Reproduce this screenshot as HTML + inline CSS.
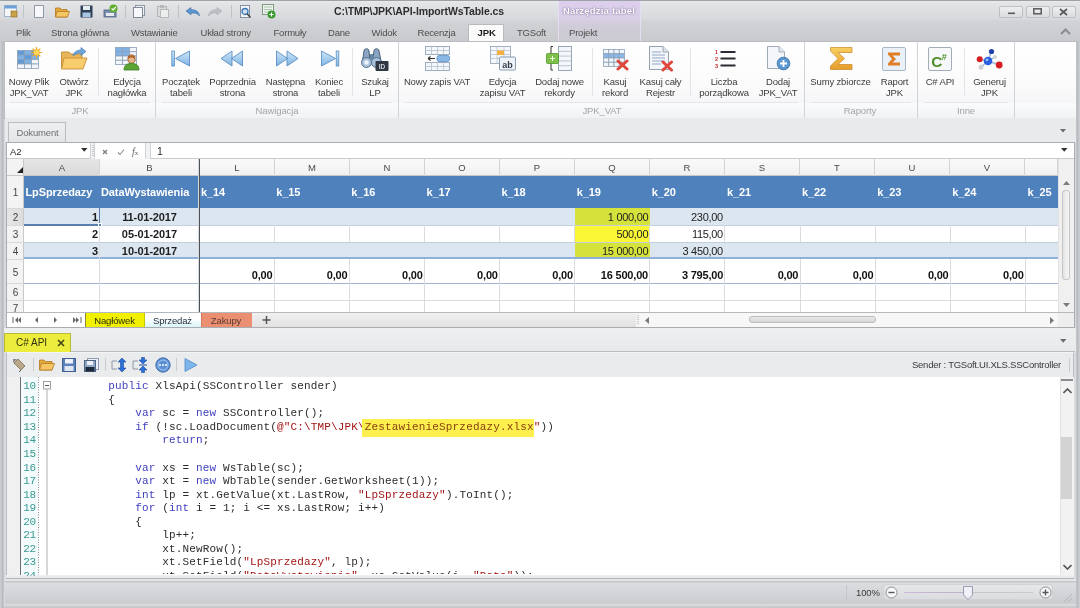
<!DOCTYPE html><html><head><meta charset="utf-8"><style>
html,body{margin:0;padding:0;}
body{width:1080px;height:608px;overflow:hidden;position:relative;background:#d4d6da;font-family:"Liberation Sans",sans-serif;}
div,svg{box-sizing:border-box;}
</style></head><body><div style="position:absolute;left:0;top:0;width:1080px;height:608px;overflow:hidden;filter:blur(0.35px)">
<div style="position:absolute;left:0px;top:0px;width:1080px;height:41px;background:linear-gradient(#e9eaec 1px,#e3e4e6 3px,#d9dadd 18px,#d0d2d5 22px,#c8cace 41px);"></div>
<div style="position:absolute;left:0px;top:0px;width:1080px;height:1px;background:#9ea1a5;"></div>
<div style="position:absolute;left:0px;top:41px;width:1080px;height:567px;background:#d7d9dc;"></div>
<div style="position:absolute;left:558px;top:1px;width:83px;height:40px;background:linear-gradient(#dccfee 0px,#d8cfe6 18px,#d0ccd9 24px,#cbc9d1 40px);border-left:1px solid #e4def0;border-right:1px solid #e4def0;"></div>
<div style="position:absolute;left:449px;width:300px;text-align:center;top:6.46px;white-space:nowrap;font:bold 9.5px/9.5px 'Liberation Sans',sans-serif;color:#ffffff;letter-spacing:0.2px;text-shadow:0 0 2px #7d6d96,0 0 1px #7d6d96;">Narzędzia tabel</div>
<div style="position:absolute;left:334px;top:6.11px;white-space:nowrap;font:bold 10.5px/10.5px 'Liberation Sans',sans-serif;color:#2e2e2e;letter-spacing:-0.1px;">C:\TMP\JPK\API-ImportWsTable.cs</div>
<div style="position:absolute;left:999px;top:6px;width:24px;height:12px;border:1px solid #bdbfc3;border-radius:2px;background:linear-gradient(#eeeff1,#dadcdf);"></div>
<div style="position:absolute;left:1026px;top:6px;width:24px;height:12px;border:1px solid #bdbfc3;border-radius:2px;background:linear-gradient(#eeeff1,#dadcdf);"></div>
<div style="position:absolute;left:1052px;top:6px;width:24px;height:12px;border:1px solid #bdbfc3;border-radius:2px;background:linear-gradient(#eeeff1,#dadcdf);"></div>
<svg style="position:absolute;left:1008px;top:12px" width="8" height="3" viewBox="0 0 8 3"><rect x="0" y="0.5" width="7" height="1.6" fill="#5a5a5a"/></svg>
<svg style="position:absolute;left:1033px;top:8px" width="10" height="7" viewBox="0 0 10 7"><rect x="0.8" y="0.8" width="7.4" height="5" fill="none" stroke="#5a5a5a" stroke-width="1.5"/></svg>
<svg style="position:absolute;left:1059px;top:8px" width="9" height="8" viewBox="0 0 9 8"><path d="M1 1 L8 7 M8 1 L1 7" stroke="#5a5a5a" stroke-width="1.7"/></svg>
<div style="position:absolute;left:16px;top:27.96px;white-space:nowrap;font:normal 9.5px/9.5px 'Liberation Sans',sans-serif;color:#4e4e4e;letter-spacing:-0.2px;">Plik</div>
<div style="position:absolute;left:51px;top:27.96px;white-space:nowrap;font:normal 9.5px/9.5px 'Liberation Sans',sans-serif;color:#4e4e4e;letter-spacing:-0.2px;">Strona główna</div>
<div style="position:absolute;left:131px;top:27.96px;white-space:nowrap;font:normal 9.5px/9.5px 'Liberation Sans',sans-serif;color:#4e4e4e;letter-spacing:-0.2px;">Wstawianie</div>
<div style="position:absolute;left:200.5px;top:27.96px;white-space:nowrap;font:normal 9.5px/9.5px 'Liberation Sans',sans-serif;color:#4e4e4e;letter-spacing:-0.2px;">Układ strony</div>
<div style="position:absolute;left:273.5px;top:27.96px;white-space:nowrap;font:normal 9.5px/9.5px 'Liberation Sans',sans-serif;color:#4e4e4e;letter-spacing:-0.2px;">Formuły</div>
<div style="position:absolute;left:328px;top:27.96px;white-space:nowrap;font:normal 9.5px/9.5px 'Liberation Sans',sans-serif;color:#4e4e4e;letter-spacing:-0.2px;">Dane</div>
<div style="position:absolute;left:371.5px;top:27.96px;white-space:nowrap;font:normal 9.5px/9.5px 'Liberation Sans',sans-serif;color:#4e4e4e;letter-spacing:-0.2px;">Widok</div>
<div style="position:absolute;left:417.5px;top:27.96px;white-space:nowrap;font:normal 9.5px/9.5px 'Liberation Sans',sans-serif;color:#4e4e4e;letter-spacing:-0.2px;">Recenzja</div>
<div style="position:absolute;left:517px;top:27.96px;white-space:nowrap;font:normal 9.5px/9.5px 'Liberation Sans',sans-serif;color:#4e4e4e;letter-spacing:-0.2px;">TGSoft</div>
<div style="position:absolute;left:569px;top:27.96px;white-space:nowrap;font:normal 9.5px/9.5px 'Liberation Sans',sans-serif;color:#4e4e4e;letter-spacing:-0.2px;">Projekt</div>
<div style="position:absolute;left:468px;top:24px;width:36px;height:18px;background:#fbfbfc;border:1px solid #b7babe;border-bottom:none;"></div>
<div style="position:absolute;left:477.5px;top:27.96px;white-space:nowrap;font:bold 9.5px/9.5px 'Liberation Sans',sans-serif;color:#1d1d1d;letter-spacing:-0.1px;">JPK</div>
<svg style="position:absolute;left:1059px;top:27px" width="13" height="9" viewBox="0 0 13 9"><path d="M2 7 L6.5 2.5 L11 7" fill="none" stroke="#8a8c90" stroke-width="2"/></svg>
<div style="position:absolute;left:4px;top:41px;width:1073px;height:78px;background:linear-gradient(#ffffff 0px,#fbfbfc 40px,#f2f3f5 77px);border:1px solid #b9bcc0;border-bottom-color:#9c9fa3;"></div>
<div style="position:absolute;left:5px;top:103px;width:1071px;height:15px;background:linear-gradient(#fafbfc,#f1f2f4);"></div>
<div style="position:absolute;left:10px;top:102px;width:140px;height:1px;background:#e4e6e9;"></div>
<div style="position:absolute;left:162px;top:102px;width:230px;height:1px;background:#e4e6e9;"></div>
<div style="position:absolute;left:405px;top:102px;width:393px;height:1px;background:#e4e6e9;"></div>
<div style="position:absolute;left:811px;top:102px;width:100px;height:1px;background:#e4e6e9;"></div>
<div style="position:absolute;left:924px;top:102px;width:84px;height:1px;background:#e4e6e9;"></div>
<div style="position:absolute;left:155px;top:42px;width:1px;height:76px;background:#d0d3d7;"></div>
<div style="position:absolute;left:398px;top:42px;width:1px;height:76px;background:#d0d3d7;"></div>
<div style="position:absolute;left:804px;top:42px;width:1px;height:76px;background:#d0d3d7;"></div>
<div style="position:absolute;left:917px;top:42px;width:1px;height:76px;background:#d0d3d7;"></div>
<div style="position:absolute;left:1014px;top:42px;width:1px;height:76px;background:#d0d3d7;"></div>
<div style="position:absolute;left:98px;top:48px;width:1px;height:48px;background:#e3e5e8;"></div>
<div style="position:absolute;left:352px;top:48px;width:1px;height:48px;background:#e3e5e8;"></div>
<div style="position:absolute;left:592px;top:48px;width:1px;height:48px;background:#e3e5e8;"></div>
<div style="position:absolute;left:690px;top:48px;width:1px;height:48px;background:#e3e5e8;"></div>
<div style="position:absolute;left:964px;top:48px;width:1px;height:48px;background:#e3e5e8;"></div>
<div style="position:absolute;left:-70px;width:300px;text-align:center;top:105.96px;white-space:nowrap;font:normal 9.5px/9.5px 'Liberation Sans',sans-serif;color:#a3a5a8;letter-spacing:-0.1px;">JPK</div>
<div style="position:absolute;left:127px;width:300px;text-align:center;top:105.96px;white-space:nowrap;font:normal 9.5px/9.5px 'Liberation Sans',sans-serif;color:#a3a5a8;letter-spacing:-0.1px;">Nawigacja</div>
<div style="position:absolute;left:452px;width:300px;text-align:center;top:105.96px;white-space:nowrap;font:normal 9.5px/9.5px 'Liberation Sans',sans-serif;color:#a3a5a8;letter-spacing:-0.1px;">JPK_VAT</div>
<div style="position:absolute;left:710px;width:300px;text-align:center;top:105.96px;white-space:nowrap;font:normal 9.5px/9.5px 'Liberation Sans',sans-serif;color:#a3a5a8;letter-spacing:-0.1px;">Raporty</div>
<div style="position:absolute;left:816px;width:300px;text-align:center;top:105.96px;white-space:nowrap;font:normal 9.5px/9.5px 'Liberation Sans',sans-serif;color:#a3a5a8;letter-spacing:-0.1px;">Inne</div>
<div style="position:absolute;left:-121px;width:300px;text-align:center;top:77.46px;white-space:nowrap;font:normal 9.5px/9.5px 'Liberation Sans',sans-serif;color:#3c3c3c;letter-spacing:-0.15px;">Nowy Plik</div>
<div style="position:absolute;left:-121px;width:300px;text-align:center;top:87.96px;white-space:nowrap;font:normal 9.5px/9.5px 'Liberation Sans',sans-serif;color:#3c3c3c;letter-spacing:-0.15px;">JPK_VAT</div>
<div style="position:absolute;left:-76px;width:300px;text-align:center;top:77.46px;white-space:nowrap;font:normal 9.5px/9.5px 'Liberation Sans',sans-serif;color:#3c3c3c;letter-spacing:-0.15px;">Otwórz</div>
<div style="position:absolute;left:-76px;width:300px;text-align:center;top:87.96px;white-space:nowrap;font:normal 9.5px/9.5px 'Liberation Sans',sans-serif;color:#3c3c3c;letter-spacing:-0.15px;">JPK</div>
<div style="position:absolute;left:-23px;width:300px;text-align:center;top:77.46px;white-space:nowrap;font:normal 9.5px/9.5px 'Liberation Sans',sans-serif;color:#3c3c3c;letter-spacing:-0.15px;">Edycja</div>
<div style="position:absolute;left:-23px;width:300px;text-align:center;top:87.96px;white-space:nowrap;font:normal 9.5px/9.5px 'Liberation Sans',sans-serif;color:#3c3c3c;letter-spacing:-0.15px;">nagłówka</div>
<div style="position:absolute;left:31px;width:300px;text-align:center;top:77.46px;white-space:nowrap;font:normal 9.5px/9.5px 'Liberation Sans',sans-serif;color:#3c3c3c;letter-spacing:-0.15px;">Początek</div>
<div style="position:absolute;left:31px;width:300px;text-align:center;top:87.96px;white-space:nowrap;font:normal 9.5px/9.5px 'Liberation Sans',sans-serif;color:#3c3c3c;letter-spacing:-0.15px;">tabeli</div>
<div style="position:absolute;left:82.5px;width:300px;text-align:center;top:77.46px;white-space:nowrap;font:normal 9.5px/9.5px 'Liberation Sans',sans-serif;color:#3c3c3c;letter-spacing:-0.15px;">Poprzednia</div>
<div style="position:absolute;left:82.5px;width:300px;text-align:center;top:87.96px;white-space:nowrap;font:normal 9.5px/9.5px 'Liberation Sans',sans-serif;color:#3c3c3c;letter-spacing:-0.15px;">strona</div>
<div style="position:absolute;left:135.5px;width:300px;text-align:center;top:77.46px;white-space:nowrap;font:normal 9.5px/9.5px 'Liberation Sans',sans-serif;color:#3c3c3c;letter-spacing:-0.15px;">Następna</div>
<div style="position:absolute;left:135.5px;width:300px;text-align:center;top:87.96px;white-space:nowrap;font:normal 9.5px/9.5px 'Liberation Sans',sans-serif;color:#3c3c3c;letter-spacing:-0.15px;">strona</div>
<div style="position:absolute;left:179px;width:300px;text-align:center;top:77.46px;white-space:nowrap;font:normal 9.5px/9.5px 'Liberation Sans',sans-serif;color:#3c3c3c;letter-spacing:-0.15px;">Koniec</div>
<div style="position:absolute;left:179px;width:300px;text-align:center;top:87.96px;white-space:nowrap;font:normal 9.5px/9.5px 'Liberation Sans',sans-serif;color:#3c3c3c;letter-spacing:-0.15px;">tabeli</div>
<div style="position:absolute;left:225px;width:300px;text-align:center;top:77.46px;white-space:nowrap;font:normal 9.5px/9.5px 'Liberation Sans',sans-serif;color:#3c3c3c;letter-spacing:-0.15px;">Szukaj</div>
<div style="position:absolute;left:225px;width:300px;text-align:center;top:87.96px;white-space:nowrap;font:normal 9.5px/9.5px 'Liberation Sans',sans-serif;color:#3c3c3c;letter-spacing:-0.15px;">LP</div>
<div style="position:absolute;left:287px;width:300px;text-align:center;top:77.46px;white-space:nowrap;font:normal 9.5px/9.5px 'Liberation Sans',sans-serif;color:#3c3c3c;letter-spacing:-0.15px;">Nowy zapis VAT</div>
<div style="position:absolute;left:352.5px;width:300px;text-align:center;top:77.46px;white-space:nowrap;font:normal 9.5px/9.5px 'Liberation Sans',sans-serif;color:#3c3c3c;letter-spacing:-0.15px;">Edycja</div>
<div style="position:absolute;left:352.5px;width:300px;text-align:center;top:87.96px;white-space:nowrap;font:normal 9.5px/9.5px 'Liberation Sans',sans-serif;color:#3c3c3c;letter-spacing:-0.15px;">zapisu VAT</div>
<div style="position:absolute;left:409.5px;width:300px;text-align:center;top:77.46px;white-space:nowrap;font:normal 9.5px/9.5px 'Liberation Sans',sans-serif;color:#3c3c3c;letter-spacing:-0.15px;">Dodaj nowe</div>
<div style="position:absolute;left:409.5px;width:300px;text-align:center;top:87.96px;white-space:nowrap;font:normal 9.5px/9.5px 'Liberation Sans',sans-serif;color:#3c3c3c;letter-spacing:-0.15px;">rekordy</div>
<div style="position:absolute;left:465px;width:300px;text-align:center;top:77.46px;white-space:nowrap;font:normal 9.5px/9.5px 'Liberation Sans',sans-serif;color:#3c3c3c;letter-spacing:-0.15px;">Kasuj</div>
<div style="position:absolute;left:465px;width:300px;text-align:center;top:87.96px;white-space:nowrap;font:normal 9.5px/9.5px 'Liberation Sans',sans-serif;color:#3c3c3c;letter-spacing:-0.15px;">rekord</div>
<div style="position:absolute;left:510.5px;width:300px;text-align:center;top:77.46px;white-space:nowrap;font:normal 9.5px/9.5px 'Liberation Sans',sans-serif;color:#3c3c3c;letter-spacing:-0.15px;">Kasuj cały</div>
<div style="position:absolute;left:510.5px;width:300px;text-align:center;top:87.96px;white-space:nowrap;font:normal 9.5px/9.5px 'Liberation Sans',sans-serif;color:#3c3c3c;letter-spacing:-0.15px;">Rejestr</div>
<div style="position:absolute;left:574px;width:300px;text-align:center;top:77.46px;white-space:nowrap;font:normal 9.5px/9.5px 'Liberation Sans',sans-serif;color:#3c3c3c;letter-spacing:-0.15px;">Liczba</div>
<div style="position:absolute;left:574px;width:300px;text-align:center;top:87.96px;white-space:nowrap;font:normal 9.5px/9.5px 'Liberation Sans',sans-serif;color:#3c3c3c;letter-spacing:-0.15px;">porządkowa</div>
<div style="position:absolute;left:628px;width:300px;text-align:center;top:77.46px;white-space:nowrap;font:normal 9.5px/9.5px 'Liberation Sans',sans-serif;color:#3c3c3c;letter-spacing:-0.15px;">Dodaj</div>
<div style="position:absolute;left:628px;width:300px;text-align:center;top:87.96px;white-space:nowrap;font:normal 9.5px/9.5px 'Liberation Sans',sans-serif;color:#3c3c3c;letter-spacing:-0.15px;">JPK_VAT</div>
<div style="position:absolute;left:690.5px;width:300px;text-align:center;top:77.46px;white-space:nowrap;font:normal 9.5px/9.5px 'Liberation Sans',sans-serif;color:#3c3c3c;letter-spacing:-0.15px;">Sumy zbiorcze</div>
<div style="position:absolute;left:744.5px;width:300px;text-align:center;top:77.46px;white-space:nowrap;font:normal 9.5px/9.5px 'Liberation Sans',sans-serif;color:#3c3c3c;letter-spacing:-0.15px;">Raport</div>
<div style="position:absolute;left:744.5px;width:300px;text-align:center;top:87.96px;white-space:nowrap;font:normal 9.5px/9.5px 'Liberation Sans',sans-serif;color:#3c3c3c;letter-spacing:-0.15px;">JPK</div>
<div style="position:absolute;left:790px;width:300px;text-align:center;top:77.46px;white-space:nowrap;font:normal 9.5px/9.5px 'Liberation Sans',sans-serif;color:#3c3c3c;letter-spacing:-0.15px;">C# API</div>
<div style="position:absolute;left:839.5px;width:300px;text-align:center;top:77.46px;white-space:nowrap;font:normal 9.5px/9.5px 'Liberation Sans',sans-serif;color:#3c3c3c;letter-spacing:-0.15px;">Generuj</div>
<div style="position:absolute;left:839.5px;width:300px;text-align:center;top:87.96px;white-space:nowrap;font:normal 9.5px/9.5px 'Liberation Sans',sans-serif;color:#3c3c3c;letter-spacing:-0.15px;">JPK</div>
<svg style="position:absolute;left:4px;top:4px" width="14" height="14" viewBox="0 0 14 14"><rect x="0.5" y="1.5" width="12" height="11" fill="#f4f6fa" stroke="#9fb3c8"/><rect x="0.5" y="1.5" width="12" height="3" fill="#6ea0d8"/><rect x="7" y="7" width="6" height="6" fill="#c9a24a" stroke="#8a6a20" stroke-width="0.6"/></svg>
<div style="position:absolute;left:23px;top:5px;width:1px;height:13px;background:#bfc2c6;"></div>
<svg style="position:absolute;left:34px;top:5px" width="10" height="13" viewBox="0 0 10 13"><path d="M0.5 0.5 H9.5 V12.5 H0.5 Z" fill="#f7f8fb" stroke="#8d98a6"/></svg>
<svg style="position:absolute;left:55px;top:7px" width="15" height="11" viewBox="0 0 15 11"><path d="M0.5 1 H5 L6.5 2.5 H12 V10 H0.5 Z" fill="#e3a93c" stroke="#b27a1f" stroke-width="0.8"/><path d="M2 4.5 H14.5 L12.5 10 H0.5 Z" fill="#f5c463" stroke="#b27a1f" stroke-width="0.8"/></svg>
<svg style="position:absolute;left:80px;top:5px" width="13" height="13" viewBox="0 0 13 13"><rect x="0.5" y="0.5" width="12" height="12" fill="#2f4156"/><rect x="3" y="1" width="7" height="4" fill="#e8edf2"/><rect x="2.5" y="7.5" width="8" height="4.5" fill="#a9c7e3"/></svg>
<svg style="position:absolute;left:103px;top:4px" width="15" height="14" viewBox="0 0 15 14"><rect x="1" y="6" width="12" height="7" fill="#7c8fb0" stroke="#4a5d7c" stroke-width="0.8"/><rect x="3" y="9" width="8" height="3" fill="#e7ecf3"/><circle cx="10.5" cy="4.5" r="4" fill="#5fae2d"/><path d="M8.5 4.5 L10.2 6 L12.8 3" stroke="#fff" stroke-width="1.2" fill="none"/></svg>
<div style="position:absolute;left:125px;top:5px;width:1px;height:13px;background:#bfc2c6;"></div>
<svg style="position:absolute;left:133px;top:5px" width="12" height="13" viewBox="0 0 12 13"><rect x="2.5" y="0.5" width="9" height="10" fill="#f1f3f7" stroke="#8d98a6"/><rect x="0.5" y="2.5" width="9" height="10" fill="#f7f8fb" stroke="#7f8b99"/></svg>
<svg style="position:absolute;left:157px;top:5px" width="12" height="13" viewBox="0 0 12 13"><rect x="0.5" y="1.5" width="9" height="10" fill="#d9dadc" stroke="#b0b3b7"/><rect x="3.5" y="4.5" width="8" height="8" fill="#eceded" stroke="#b6b8bb"/><rect x="3" y="0" width="4" height="3" fill="#b8babd"/></svg>
<div style="position:absolute;left:178px;top:5px;width:1px;height:13px;background:#bfc2c6;"></div>
<svg style="position:absolute;left:185px;top:7px" width="15" height="10" viewBox="0 0 15 10"><path d="M1 4 L6 0.5 V2.8 C10 2.5 14 4 14.5 9 C12.5 6.2 10 5.8 6 6 V8 Z" fill="#5b95cf" stroke="#3f6fa6" stroke-width="0.6"/></svg>
<svg style="position:absolute;left:208px;top:7px" width="15" height="10" viewBox="0 0 15 10"><path d="M14 4 L9 0.5 V2.8 C5 2.5 1 4 0.5 9 C2.5 6.2 5 5.8 9 6 V8 Z" fill="#bcbfc3" stroke="#a9acb0" stroke-width="0.6"/></svg>
<div style="position:absolute;left:231px;top:5px;width:1px;height:13px;background:#bfc2c6;"></div>
<svg style="position:absolute;left:240px;top:5px" width="12" height="14" viewBox="0 0 12 14"><rect x="0.5" y="0.5" width="9" height="12" fill="#f4f6fa" stroke="#8390a0"/><circle cx="5" cy="6.5" r="3" fill="#cfe3f5" stroke="#3d76b5" stroke-width="1.3"/><path d="M7.2 8.7 L10.5 12.5" stroke="#444" stroke-width="1.6"/></svg>
<svg style="position:absolute;left:262px;top:4px" width="14" height="15" viewBox="0 0 14 15"><rect x="0.5" y="0.5" width="11" height="10" fill="#eef3ee" stroke="#7e9a84"/><path d="M2 3 H10 M2 5.5 H10 M2 8 H10" stroke="#9bb9a0" stroke-width="0.8"/><circle cx="9.5" cy="10.5" r="4" fill="#3f9c35"/><path d="M7.5 10.5 H11.5 M9.5 8.5 V12.5" stroke="#fff" stroke-width="1"/></svg>
<svg style="position:absolute;left:17px;top:50px" width="23" height="20" viewBox="0 0 23 20"><rect x="0.50" y="0.50" width="7.00" height="4.50" fill="#5f9bd6" stroke="#8aa0b8" stroke-width="0.8"/><rect x="7.50" y="0.50" width="7.00" height="4.50" fill="#7fb1e4" stroke="#8aa0b8" stroke-width="0.8"/><rect x="14.50" y="0.50" width="7.00" height="4.50" fill="#5f9bd6" stroke="#8aa0b8" stroke-width="0.8"/><rect x="0.50" y="5.00" width="7.00" height="4.50" fill="#7fb1e4" stroke="#8aa0b8" stroke-width="0.8"/><rect x="7.50" y="5.00" width="7.00" height="4.50" fill="#5f9bd6" stroke="#8aa0b8" stroke-width="0.8"/><rect x="14.50" y="5.00" width="7.00" height="4.50" fill="#7fb1e4" stroke="#8aa0b8" stroke-width="0.8"/><rect x="0.50" y="9.50" width="7.00" height="4.50" fill="#5f9bd6" stroke="#8aa0b8" stroke-width="0.8"/><rect x="7.50" y="9.50" width="7.00" height="4.50" fill="#7fb1e4" stroke="#8aa0b8" stroke-width="0.8"/><rect x="14.50" y="9.50" width="7.00" height="4.50" fill="#f2f5fa" stroke="#8aa0b8" stroke-width="0.8"/><rect x="0.50" y="14.00" width="7.00" height="4.50" fill="#f2f5fa" stroke="#8aa0b8" stroke-width="0.8"/><rect x="7.50" y="14.00" width="7.00" height="4.50" fill="#f2f5fa" stroke="#8aa0b8" stroke-width="0.8"/><rect x="14.50" y="14.00" width="7.00" height="4.50" fill="#f2f5fa" stroke="#8aa0b8" stroke-width="0.8"/></svg>
<svg style="position:absolute;left:30px;top:47px" width="13" height="12" viewBox="0 0 13 12"><circle cx="6.5" cy="5.5" r="3.2" fill="#f3b52e"/><path d="M6.5 0 V11 M1 5.5 H12 M2.6 1.6 L10.4 9.4 M10.4 1.6 L2.6 9.4" stroke="#f0a820" stroke-width="1.2"/><circle cx="6.5" cy="5.5" r="2.6" fill="#fcd45a"/></svg>
<svg style="position:absolute;left:60px;top:47px" width="28" height="23" viewBox="0 0 28 23"><path d="M1.5 5 H9 L11 7 H22 V21.5 H1.5 Z" fill="#e9b55a" stroke="#c08a33" stroke-width="0.9"/><path d="M4 11 H27 L23 22 H1.5 Z" fill="#f8cd6e" stroke="#c98f35" stroke-width="0.9"/><path d="M13 9 C14 4 18 3 21 3 V0.5 L26 4.5 L21 8.5 V6 C18 6 15 7 13 9 Z" fill="#6fa6d8" stroke="#4b83bf" stroke-width="0.7"/></svg>
<svg style="position:absolute;left:115px;top:47px" width="23" height="19" viewBox="0 0 23 19"><rect x="0.50" y="0.50" width="7.00" height="4.25" fill="#7fb1e4" stroke="#8aa0b8" stroke-width="0.8"/><rect x="7.50" y="0.50" width="7.00" height="4.25" fill="#7fb1e4" stroke="#8aa0b8" stroke-width="0.8"/><rect x="14.50" y="0.50" width="7.00" height="4.25" fill="#f2f5fa" stroke="#8aa0b8" stroke-width="0.8"/><rect x="0.50" y="4.75" width="7.00" height="4.25" fill="#7fb1e4" stroke="#8aa0b8" stroke-width="0.8"/><rect x="7.50" y="4.75" width="7.00" height="4.25" fill="#7fb1e4" stroke="#8aa0b8" stroke-width="0.8"/><rect x="14.50" y="4.75" width="7.00" height="4.25" fill="#f2f5fa" stroke="#8aa0b8" stroke-width="0.8"/><rect x="0.50" y="9.00" width="7.00" height="4.25" fill="#f2f5fa" stroke="#8aa0b8" stroke-width="0.8"/><rect x="7.50" y="9.00" width="7.00" height="4.25" fill="#f2f5fa" stroke="#8aa0b8" stroke-width="0.8"/><rect x="14.50" y="9.00" width="7.00" height="4.25" fill="#f2f5fa" stroke="#8aa0b8" stroke-width="0.8"/><rect x="0.50" y="13.25" width="7.00" height="4.25" fill="#f2f5fa" stroke="#8aa0b8" stroke-width="0.8"/><rect x="7.50" y="13.25" width="7.00" height="4.25" fill="#f2f5fa" stroke="#8aa0b8" stroke-width="0.8"/><rect x="14.50" y="13.25" width="7.00" height="4.25" fill="#f2f5fa" stroke="#8aa0b8" stroke-width="0.8"/></svg>
<svg style="position:absolute;left:123px;top:54px" width="17" height="17" viewBox="0 0 17 17"><ellipse cx="8.5" cy="5" rx="3.6" ry="4.2" fill="#e7b48c" stroke="#9a5a2a" stroke-width="0.8"/><path d="M4.8 3.5 C5.5 0.5 11.5 0.5 12.2 3.5 L12 5 C10 3 7 3 5 5 Z" fill="#b0652a"/><path d="M1 16 C1 11 4 9.5 8.5 9.5 C13 9.5 16 11 16 16 Z" fill="#5da436" stroke="#3b7d22" stroke-width="0.8"/></svg>
<svg style="position:absolute;left:171px;top:50px" width="20" height="17" viewBox="0 0 20 17"><defs><linearGradient id="nb" x1="0" y1="0" x2="0" y2="1"><stop offset="0" stop-color="#cfe6f8"/><stop offset="1" stop-color="#7fb4e3"/></linearGradient></defs><rect x="0.8" y="1" width="2.6" height="15" fill="url(#nb)" stroke="#5b8fc2" stroke-width="0.8"/><path d="M18.5 1 V16 L4.5 8.5 Z" fill="url(#nb)" stroke="#5b8fc2" stroke-width="0.9"/></svg>
<svg style="position:absolute;left:220px;top:50px" width="24" height="17" viewBox="0 0 24 17"><path d="M12 1 V16 L1 8.5 Z M22.5 1 V16 L11.5 8.5 Z" fill="url(#nb)" stroke="#5b8fc2" stroke-width="0.9"/></svg>
<svg style="position:absolute;left:275px;top:50px" width="24" height="17" viewBox="0 0 24 17"><path d="M1.5 1 V16 L12.5 8.5 Z M12 1 V16 L23 8.5 Z" fill="url(#nb)" stroke="#5b8fc2" stroke-width="0.9"/></svg>
<svg style="position:absolute;left:320px;top:50px" width="20" height="17" viewBox="0 0 20 17"><path d="M1.5 1 V16 L15.5 8.5 Z" fill="url(#nb)" stroke="#5b8fc2" stroke-width="0.9"/><rect x="16.2" y="1" width="2.6" height="15" fill="url(#nb)" stroke="#5b8fc2" stroke-width="0.8"/></svg>
<svg style="position:absolute;left:361px;top:47px" width="29" height="25" viewBox="0 0 29 25"><path d="M3 4 C3 1 8 1 8 4 L9 14 H1.5 Z" fill="#8aa6c4" stroke="#4a5f78" stroke-width="1"/><path d="M13 4 C13 1 18 1 18 4 L20 14 H11.5 Z" fill="#8aa6c4" stroke="#4a5f78" stroke-width="1"/><circle cx="5.5" cy="15.5" r="5" fill="#a9c1da" stroke="#54708f"/><circle cx="5.5" cy="15.5" r="2.3" fill="#eef3f9"/><circle cx="15.5" cy="15.5" r="5" fill="#a9c1da" stroke="#54708f"/><rect x="9" y="7" width="3" height="6" fill="#6a86a6"/><rect x="14.5" y="14" width="13" height="10" rx="1" fill="#323843"/><text x="21" y="21.6" font-family="Liberation Sans" font-size="6.5" font-weight="bold" fill="#cfd4db" text-anchor="middle">ID</text></svg>
<svg style="position:absolute;left:425px;top:46px" width="26" height="26" viewBox="0 0 26 26"><rect x="0.5" y="0.5" width="24" height="8" fill="#f5f7fb" stroke="#95a6b8" stroke-width="0.9"/><path d="M6.5 0.5 V8.5 M12.5 0.5 V8.5 M18.5 0.5 V8.5 M0.5 4.5 H24.5" stroke="#b3c1cf" stroke-width="0.8"/><rect x="0.5" y="16.5" width="24" height="8" fill="#f5f7fb" stroke="#95a6b8" stroke-width="0.9"/><path d="M6.5 16.5 V24.5 M12.5 16.5 V24.5 M18.5 16.5 V24.5 M0.5 20.5 H24.5" stroke="#b3c1cf" stroke-width="0.8"/><rect x="12" y="9.5" width="12.5" height="6" rx="2" fill="#8ab8e6" stroke="#5f8fc4" stroke-width="0.8"/><path d="M3 12.5 H10 M3 12.5 L5.5 10.5 M3 12.5 L5.5 14.5" stroke="#333" stroke-width="1.1" fill="none"/></svg>
<svg style="position:absolute;left:490px;top:46px" width="27" height="26" viewBox="0 0 27 26"><rect x="0.5" y="0.5" width="20" height="17" fill="#f5f7fb" stroke="#9aa9b9" stroke-width="0.9"/><path d="M7 0.5 V17.5 M14 0.5 V17.5 M0.5 4.5 H20.5 M0.5 8.5 H20.5 M0.5 12.5 H20.5" stroke="#b8c4d0" stroke-width="0.8"/><rect x="7" y="4.5" width="7" height="4.5" fill="#f4b040"/><rect x="9.5" y="11" width="16" height="13" rx="1" fill="#eef3f9" stroke="#7f93a9" stroke-width="0.9"/><text x="17.5" y="21.5" font-family="Liberation Sans" font-size="9" font-weight="bold" fill="#333c48" text-anchor="middle">ab</text></svg>
<svg style="position:absolute;left:546px;top:46px" width="27" height="26" viewBox="0 0 27 26"><path d="M7 0.5 H5 V24 H7" stroke="#333" stroke-width="1" fill="none"/><rect x="12.5" y="0.5" width="13" height="24" fill="#f5f7fb" stroke="#8d9db0" stroke-width="0.9"/><path d="M12.5 5.3 H25.5 M12.5 10.1 H25.5 M12.5 14.9 H25.5 M12.5 19.7 H25.5" stroke="#a9b7c6" stroke-width="0.8"/><rect x="0.5" y="7.5" width="12" height="10" rx="1" fill="#7fc04b" stroke="#4f9a2a" stroke-width="0.8"/><path d="M4 12.5 H9 M6.5 10 V15" stroke="#e9f7df" stroke-width="1"/></svg>
<svg style="position:absolute;left:603px;top:49px" width="23" height="19" viewBox="0 0 23 19"><rect x="0.50" y="0.50" width="5.25" height="4.25" fill="#f2f5fa" stroke="#8ea3b8" stroke-width="0.8"/><rect x="5.75" y="0.50" width="5.25" height="4.25" fill="#f2f5fa" stroke="#8ea3b8" stroke-width="0.8"/><rect x="11.00" y="0.50" width="5.25" height="4.25" fill="#f2f5fa" stroke="#8ea3b8" stroke-width="0.8"/><rect x="16.25" y="0.50" width="5.25" height="4.25" fill="#f2f5fa" stroke="#8ea3b8" stroke-width="0.8"/><rect x="0.50" y="4.75" width="5.25" height="4.25" fill="#8ab8e6" stroke="#8ea3b8" stroke-width="0.8"/><rect x="5.75" y="4.75" width="5.25" height="4.25" fill="#8ab8e6" stroke="#8ea3b8" stroke-width="0.8"/><rect x="11.00" y="4.75" width="5.25" height="4.25" fill="#8ab8e6" stroke="#8ea3b8" stroke-width="0.8"/><rect x="16.25" y="4.75" width="5.25" height="4.25" fill="#8ab8e6" stroke="#8ea3b8" stroke-width="0.8"/><rect x="0.50" y="9.00" width="5.25" height="4.25" fill="#f2f5fa" stroke="#8ea3b8" stroke-width="0.8"/><rect x="5.75" y="9.00" width="5.25" height="4.25" fill="#f2f5fa" stroke="#8ea3b8" stroke-width="0.8"/><rect x="11.00" y="9.00" width="5.25" height="4.25" fill="#f2f5fa" stroke="#8ea3b8" stroke-width="0.8"/><rect x="16.25" y="9.00" width="5.25" height="4.25" fill="#f2f5fa" stroke="#8ea3b8" stroke-width="0.8"/><rect x="0.50" y="13.25" width="5.25" height="4.25" fill="#f2f5fa" stroke="#8ea3b8" stroke-width="0.8"/><rect x="5.75" y="13.25" width="5.25" height="4.25" fill="#f2f5fa" stroke="#8ea3b8" stroke-width="0.8"/><rect x="11.00" y="13.25" width="5.25" height="4.25" fill="#f2f5fa" stroke="#8ea3b8" stroke-width="0.8"/><rect x="16.25" y="13.25" width="5.25" height="4.25" fill="#f2f5fa" stroke="#8ea3b8" stroke-width="0.8"/></svg>
<svg style="position:absolute;left:616px;top:59px" width="13" height="12" viewBox="0 0 13 12"><path d="M2 2 L11 10 M11 2 L2 10" stroke="#e0463a" stroke-width="3" stroke-linecap="round"/></svg>
<svg style="position:absolute;left:649px;top:46px" width="25" height="26" viewBox="0 0 25 26"><path d="M0.5 0.5 H14 L19.5 6 V23.5 H0.5 Z" fill="#f4f6fa" stroke="#8b97a6" stroke-width="0.9"/><path d="M14 0.5 V6 H19.5" fill="#dfe5ec" stroke="#8b97a6" stroke-width="0.8"/><path d="M3 6 H12 M3 9 H16 M3 12 H16 M3 15 H16 M3 18 H12" stroke="#8fa8c6" stroke-width="1.2"/><path d="M14 16 L22.5 24 M22.5 16 L14 24" stroke="#e0463a" stroke-width="3" stroke-linecap="round"/></svg>
<svg style="position:absolute;left:713px;top:49px" width="24" height="20" viewBox="0 0 24 20"><text x="2" y="5" font-family="Liberation Sans" font-size="5.5" font-weight="bold" fill="#c42a2a">1</text><text x="2" y="11.5" font-family="Liberation Sans" font-size="5.5" font-weight="bold" fill="#c42a2a">2</text><text x="2" y="18.5" font-family="Liberation Sans" font-size="5.5" font-weight="bold" fill="#c42a2a">3</text><path d="M7.5 3 H22.5 M7.5 9.5 H22.5 M7.5 16.5 H22.5" stroke="#2a2e33" stroke-width="2"/></svg>
<svg style="position:absolute;left:767px;top:46px" width="25" height="26" viewBox="0 0 25 26"><path d="M0.5 0.5 H12 L17.5 6 V22.5 H0.5 Z" fill="#f4f6fa" stroke="#96a2b0" stroke-width="0.9"/><path d="M12 0.5 V6 H17.5" fill="#e3e8ee" stroke="#96a2b0" stroke-width="0.8"/><circle cx="16.5" cy="17.5" r="6.3" fill="#5b97d1" stroke="#3b70aa" stroke-width="0.9"/><path d="M16.5 14 V21 M13 17.5 H20" stroke="#fff" stroke-width="1.8"/></svg>
<svg style="position:absolute;left:830px;top:47px" width="23" height="23" viewBox="0 0 23 23"><defs><linearGradient id="sg" x1="0" y1="0" x2="0" y2="1"><stop offset="0" stop-color="#f9cf62"/><stop offset="1" stop-color="#e59d2a"/></linearGradient></defs><path d="M0.5 0.5 H22 V5.5 H8 L14.5 11.5 L8 17.5 H22 V22.5 H0.5 V19 L8 11.5 L0.5 4 Z" fill="url(#sg)" stroke="#c98522" stroke-width="0.7"/></svg>
<svg style="position:absolute;left:882px;top:47px" width="25" height="25" viewBox="0 0 25 25"><rect x="0.5" y="0.5" width="23" height="23" rx="1.5" fill="#e9f0f8" stroke="#a8b6c6" stroke-width="1"/><path d="M6 5.5 H18 V8.5 H10.5 L14 12 L10.5 15.5 H18 V18.5 H6 V16.5 L10 12 L6 7.5 Z" fill="#e07e28"/></svg>
<svg style="position:absolute;left:928px;top:47px" width="25" height="25" viewBox="0 0 25 25"><rect x="0.5" y="0.5" width="23" height="23" rx="1.5" fill="#f6f8fa" stroke="#a3adb8" stroke-width="1"/><text x="3.3" y="19.6" font-family="Liberation Sans" font-size="15.5" font-weight="bold" fill="#4f8f2a">C</text><text x="13.8" y="12.6" font-family="Liberation Sans" font-size="9" font-weight="bold" fill="#4f8f2a">#</text></svg>
<svg style="position:absolute;left:975px;top:48px" width="30" height="24" viewBox="0 0 30 24"><path d="M13 13 L16.5 3.5 M13 13 L4.5 11 M13 13 L24 17 M13 13 L6 19 M13 13 L20 9" stroke="#9fb8d8" stroke-width="1.5"/><circle cx="16.5" cy="3.5" r="2.6" fill="#1f3fa8"/><circle cx="4.7" cy="11.2" r="3" fill="#d81f1f"/><circle cx="24.2" cy="17" r="3.4" fill="#d81f1f"/><circle cx="6" cy="19.2" r="2.5" fill="#cfcfcf"/><circle cx="20" cy="9" r="2" fill="#d5d5d5"/><circle cx="13" cy="13" r="4.3" fill="#2a5fe0"/><circle cx="12" cy="11.8" r="1.4" fill="#9fc0ff"/></svg>
<div style="position:absolute;left:5px;top:118px;width:1071px;height:24px;background:#e9eaec;"></div>
<div style="position:absolute;left:8px;top:122px;width:58px;height:21px;background:linear-gradient(#eeeff1,#e3e4e6);border:1px solid #b9bcc0;border-bottom:none;"></div>
<div style="position:absolute;left:16.5px;top:127.96px;white-space:nowrap;font:normal 9.5px/9.5px 'Liberation Sans',sans-serif;color:#6f7174;letter-spacing:-0.15px;">Dokument</div>
<svg style="position:absolute;left:1060px;top:129px" width="7" height="5" viewBox="0 0 7 5"><path d="M0 0 H6 L3 3.5 Z" fill="#6a6c70"/></svg>
<div style="position:absolute;left:6px;top:142px;width:1069px;height:186px;background:#ffffff;border:1px solid #a9acb0;"></div>
<div style="position:absolute;left:7px;top:143px;width:1067px;height:16px;background:#ffffff;border-bottom:1px solid #c9cbce;"></div>
<div style="position:absolute;left:90px;top:143px;width:5px;height:16px;background:#f1f2f3;border-left:1px solid #d0d2d5;border-right:1px solid #d0d2d5;"></div>
<svg style="position:absolute;left:92px;top:145px" width="2" height="12" viewBox="0 0 2 12"><path d="M1 0 V12" stroke="#a0a3a7" stroke-width="1" stroke-dasharray="1,1"/></svg>
<div style="position:absolute;left:95px;top:143px;width:50px;height:16px;background:#ffffff;"></div>
<div style="position:absolute;left:145px;top:143px;width:6px;height:16px;background:#f1f2f3;border-left:1px solid #d0d2d5;border-right:1px solid #d0d2d5;"></div>
<div style="position:absolute;left:10px;top:146.96px;white-space:nowrap;font:normal 9.5px/9.5px 'Liberation Sans',sans-serif;color:#2a2a2a;letter-spacing:0px;">A2</div>
<svg style="position:absolute;left:81px;top:148px" width="7" height="5" viewBox="0 0 7 5"><path d="M0 0 H6.5 L3.25 3.8 Z" fill="#2f2f2f"/></svg>
<svg style="position:absolute;left:101px;top:147px" width="30" height="10" viewBox="0 0 30 10"><path d="M2 3 L6 7 M6 3 L2 7" stroke="#7d7f82" stroke-width="1.4"/><path d="M17 5.5 L19 7.5 L23 2.5" stroke="#8c8e91" stroke-width="1.1" fill="none"/></svg>
<div style="position:absolute;left:132px;top:146.53px;white-space:nowrap;font:normal 10px/10px 'Liberation Serif',serif;color:#666;letter-spacing:0px;"><i>f</i><span style='font-size:7px'>x</span></div>
<div style="position:absolute;left:157px;top:146.11px;white-space:nowrap;font:normal 10.5px/10.5px 'Liberation Sans',sans-serif;color:#2a2a2a;letter-spacing:0px;">1</div>
<svg style="position:absolute;left:1061px;top:148px" width="7" height="5" viewBox="0 0 7 5"><path d="M0 0 H6.5 L3.25 3.8 Z" fill="#2f2f2f"/></svg>
<div style="position:absolute;left:7px;top:159px;width:1051px;height:17px;background:linear-gradient(#fafafa,#f1f1f1);border-bottom:1px solid #c6c8cb;"></div>
<div style="position:absolute;left:7px;top:176px;width:17px;height:136px;background:#f3f3f3;border-right:1px solid #c6c8cb;"></div>
<div style="position:absolute;left:7px;top:159px;width:17px;height:17px;background:#f3f3f3;border-right:1px solid #c6c8cb;border-bottom:1px solid #c6c8cb;"></div>
<svg style="position:absolute;left:17px;top:167px" width="7" height="7" viewBox="0 0 7 7"><path d="M6 0 V6 H0 Z" fill="#222"/></svg>
<div style="position:absolute;left:24px;top:159px;width:76px;height:17px;background:linear-gradient(#e6e6e6,#dadada);border-bottom:1px solid #c6c8cb;"></div>
<div style="position:absolute;left:99px;top:159px;width:1px;height:17px;background:#d2d4d7;"></div>
<div style="position:absolute;left:-88.0px;width:300px;text-align:center;top:163.46px;white-space:nowrap;font:normal 9.5px/9.5px 'Liberation Sans',sans-serif;color:#4a4a4a;letter-spacing:0px;">A</div>
<div style="position:absolute;left:198px;top:159px;width:1px;height:17px;background:#d2d4d7;"></div>
<div style="position:absolute;left:-0.5px;width:300px;text-align:center;top:163.46px;white-space:nowrap;font:normal 9.5px/9.5px 'Liberation Sans',sans-serif;color:#4a4a4a;letter-spacing:0px;">B</div>
<div style="position:absolute;left:273.5px;top:159px;width:1px;height:17px;background:#d2d4d7;"></div>
<div style="position:absolute;left:87.0px;width:300px;text-align:center;top:163.46px;white-space:nowrap;font:normal 9.5px/9.5px 'Liberation Sans',sans-serif;color:#4a4a4a;letter-spacing:0px;">L</div>
<div style="position:absolute;left:348.5px;top:159px;width:1px;height:17px;background:#d2d4d7;"></div>
<div style="position:absolute;left:162.0px;width:300px;text-align:center;top:163.46px;white-space:nowrap;font:normal 9.5px/9.5px 'Liberation Sans',sans-serif;color:#4a4a4a;letter-spacing:0px;">M</div>
<div style="position:absolute;left:423.5px;top:159px;width:1px;height:17px;background:#d2d4d7;"></div>
<div style="position:absolute;left:237.0px;width:300px;text-align:center;top:163.46px;white-space:nowrap;font:normal 9.5px/9.5px 'Liberation Sans',sans-serif;color:#4a4a4a;letter-spacing:0px;">N</div>
<div style="position:absolute;left:498.5px;top:159px;width:1px;height:17px;background:#d2d4d7;"></div>
<div style="position:absolute;left:312.0px;width:300px;text-align:center;top:163.46px;white-space:nowrap;font:normal 9.5px/9.5px 'Liberation Sans',sans-serif;color:#4a4a4a;letter-spacing:0px;">O</div>
<div style="position:absolute;left:573.5px;top:159px;width:1px;height:17px;background:#d2d4d7;"></div>
<div style="position:absolute;left:387.0px;width:300px;text-align:center;top:163.46px;white-space:nowrap;font:normal 9.5px/9.5px 'Liberation Sans',sans-serif;color:#4a4a4a;letter-spacing:0px;">P</div>
<div style="position:absolute;left:648.5px;top:159px;width:1px;height:17px;background:#d2d4d7;"></div>
<div style="position:absolute;left:462.0px;width:300px;text-align:center;top:163.46px;white-space:nowrap;font:normal 9.5px/9.5px 'Liberation Sans',sans-serif;color:#4a4a4a;letter-spacing:0px;">Q</div>
<div style="position:absolute;left:723.5px;top:159px;width:1px;height:17px;background:#d2d4d7;"></div>
<div style="position:absolute;left:537.0px;width:300px;text-align:center;top:163.46px;white-space:nowrap;font:normal 9.5px/9.5px 'Liberation Sans',sans-serif;color:#4a4a4a;letter-spacing:0px;">R</div>
<div style="position:absolute;left:798.5px;top:159px;width:1px;height:17px;background:#d2d4d7;"></div>
<div style="position:absolute;left:612.0px;width:300px;text-align:center;top:163.46px;white-space:nowrap;font:normal 9.5px/9.5px 'Liberation Sans',sans-serif;color:#4a4a4a;letter-spacing:0px;">S</div>
<div style="position:absolute;left:873.5px;top:159px;width:1px;height:17px;background:#d2d4d7;"></div>
<div style="position:absolute;left:687.0px;width:300px;text-align:center;top:163.46px;white-space:nowrap;font:normal 9.5px/9.5px 'Liberation Sans',sans-serif;color:#4a4a4a;letter-spacing:0px;">T</div>
<div style="position:absolute;left:948.5px;top:159px;width:1px;height:17px;background:#d2d4d7;"></div>
<div style="position:absolute;left:762.0px;width:300px;text-align:center;top:163.46px;white-space:nowrap;font:normal 9.5px/9.5px 'Liberation Sans',sans-serif;color:#4a4a4a;letter-spacing:0px;">U</div>
<div style="position:absolute;left:1023.5px;top:159px;width:1px;height:17px;background:#d2d4d7;"></div>
<div style="position:absolute;left:837.0px;width:300px;text-align:center;top:163.46px;white-space:nowrap;font:normal 9.5px/9.5px 'Liberation Sans',sans-serif;color:#4a4a4a;letter-spacing:0px;">V</div>
<div style="position:absolute;left:1057px;top:159px;width:1px;height:17px;background:#d2d4d7;"></div>
<div style="position:absolute;left:24px;top:176px;width:1034px;height:32px;background:#4f81bd;"></div>
<div style="position:absolute;left:24px;top:208px;width:1034px;height:17px;background:#dce6f1;"></div>
<div style="position:absolute;left:24px;top:225px;width:1034px;height:17px;background:#ffffff;"></div>
<div style="position:absolute;left:24px;top:242px;width:1034px;height:17px;background:#dce6f1;"></div>
<div style="position:absolute;left:575.15px;top:208px;width:75.13px;height:17px;background:#d6e23c;"></div>
<div style="position:absolute;left:575.15px;top:225px;width:75.13px;height:17px;background:#fbf735;"></div>
<div style="position:absolute;left:575.15px;top:242px;width:75.13px;height:16px;background:#d6e23c;"></div>
<div style="position:absolute;left:24px;top:224.5px;width:1034px;height:1px;background:#c3cfdd;"></div>
<div style="position:absolute;left:24px;top:241.5px;width:1034px;height:1px;background:#c3cfdd;"></div>
<div style="position:absolute;left:24px;top:283px;width:1034px;height:1px;background:#9fb6d2;"></div>
<div style="position:absolute;left:24px;top:299.5px;width:1034px;height:1px;background:#dcdcdc;"></div>
<div style="position:absolute;left:24px;top:257px;width:1034px;height:2px;background:#8eb0da;"></div>
<div style="position:absolute;left:99px;top:208px;width:1px;height:104px;background:#dadde0;"></div>
<div style="position:absolute;left:274px;top:225px;width:1px;height:17px;background:#dadde0;"></div>
<div style="position:absolute;left:274px;top:259px;width:1px;height:53px;background:#dadde0;"></div>
<div style="position:absolute;left:349px;top:225px;width:1px;height:17px;background:#dadde0;"></div>
<div style="position:absolute;left:349px;top:259px;width:1px;height:53px;background:#dadde0;"></div>
<div style="position:absolute;left:424px;top:225px;width:1px;height:17px;background:#dadde0;"></div>
<div style="position:absolute;left:424px;top:259px;width:1px;height:53px;background:#dadde0;"></div>
<div style="position:absolute;left:499px;top:225px;width:1px;height:17px;background:#dadde0;"></div>
<div style="position:absolute;left:499px;top:259px;width:1px;height:53px;background:#dadde0;"></div>
<div style="position:absolute;left:574px;top:225px;width:1px;height:17px;background:#dadde0;"></div>
<div style="position:absolute;left:574px;top:259px;width:1px;height:53px;background:#dadde0;"></div>
<div style="position:absolute;left:649px;top:225px;width:1px;height:17px;background:#dadde0;"></div>
<div style="position:absolute;left:649px;top:259px;width:1px;height:53px;background:#dadde0;"></div>
<div style="position:absolute;left:724px;top:225px;width:1px;height:17px;background:#dadde0;"></div>
<div style="position:absolute;left:724px;top:259px;width:1px;height:53px;background:#dadde0;"></div>
<div style="position:absolute;left:800px;top:225px;width:1px;height:17px;background:#dadde0;"></div>
<div style="position:absolute;left:800px;top:259px;width:1px;height:53px;background:#dadde0;"></div>
<div style="position:absolute;left:875px;top:225px;width:1px;height:17px;background:#dadde0;"></div>
<div style="position:absolute;left:875px;top:259px;width:1px;height:53px;background:#dadde0;"></div>
<div style="position:absolute;left:950px;top:225px;width:1px;height:17px;background:#dadde0;"></div>
<div style="position:absolute;left:950px;top:259px;width:1px;height:53px;background:#dadde0;"></div>
<div style="position:absolute;left:1025px;top:225px;width:1px;height:17px;background:#dadde0;"></div>
<div style="position:absolute;left:1025px;top:259px;width:1px;height:53px;background:#dadde0;"></div>
<div style="position:absolute;left:198px;top:176px;width:1px;height:136px;background:#d6d9dc;"></div>
<div style="position:absolute;left:199px;top:159px;width:1px;height:153px;background:#4e5259;"></div>
<div style="position:absolute;left:24px;top:224px;width:76px;height:2px;background:#5b7fae;"></div>
<div style="position:absolute;left:98.5px;top:208px;width:1.5px;height:17px;background:#5b7fae;"></div>
<div style="position:absolute;left:98px;top:222.5px;width:4px;height:4px;background:#5b7fae;border:1px solid #fff;"></div>
<div style="position:absolute;left:7px;top:208px;width:17px;height:17px;background:linear-gradient(90deg,#e6e6e6,#dcdcdc);border-right:1px solid #c6c8cb;"></div>
<div style="position:absolute;left:-134.5px;width:300px;text-align:center;top:187.53px;white-space:nowrap;font:normal 10px/10px 'Liberation Sans',sans-serif;color:#444;letter-spacing:0px;">1</div>
<div style="position:absolute;left:-134.5px;width:300px;text-align:center;top:212.53px;white-space:nowrap;font:normal 10px/10px 'Liberation Sans',sans-serif;color:#444;letter-spacing:0px;">2</div>
<div style="position:absolute;left:-134.5px;width:300px;text-align:center;top:229.53px;white-space:nowrap;font:normal 10px/10px 'Liberation Sans',sans-serif;color:#444;letter-spacing:0px;">3</div>
<div style="position:absolute;left:-134.5px;width:300px;text-align:center;top:246.53px;white-space:nowrap;font:normal 10px/10px 'Liberation Sans',sans-serif;color:#444;letter-spacing:0px;">4</div>
<div style="position:absolute;left:-134.5px;width:300px;text-align:center;top:267.54px;white-space:nowrap;font:normal 10px/10px 'Liberation Sans',sans-serif;color:#444;letter-spacing:0px;">5</div>
<div style="position:absolute;left:-134.5px;width:300px;text-align:center;top:287.54px;white-space:nowrap;font:normal 10px/10px 'Liberation Sans',sans-serif;color:#444;letter-spacing:0px;">6</div>
<div style="position:absolute;left:-134.5px;width:300px;text-align:center;top:303.54px;white-space:nowrap;font:normal 10px/10px 'Liberation Sans',sans-serif;color:#444;letter-spacing:0px;">7</div>
<div style="position:absolute;left:7px;top:207.5px;width:17px;height:1px;background:#d6d8db;"></div>
<div style="position:absolute;left:7px;top:224.5px;width:17px;height:1px;background:#d6d8db;"></div>
<div style="position:absolute;left:7px;top:241.5px;width:17px;height:1px;background:#d6d8db;"></div>
<div style="position:absolute;left:7px;top:258.5px;width:17px;height:1px;background:#d6d8db;"></div>
<div style="position:absolute;left:7px;top:283.0px;width:17px;height:1px;background:#d6d8db;"></div>
<div style="position:absolute;left:7px;top:299.5px;width:17px;height:1px;background:#d6d8db;"></div>
<div style="position:absolute;left:25.5px;top:186.69px;white-space:nowrap;font:bold 11px/11px 'Liberation Sans',sans-serif;color:#ffffff;letter-spacing:-0.1px;">LpSprzedazy</div>
<div style="position:absolute;left:101px;top:186.69px;white-space:nowrap;font:bold 11px/11px 'Liberation Sans',sans-serif;color:#ffffff;letter-spacing:-0.1px;">DataWystawienia</div>
<div style="position:absolute;left:201.0px;top:186.69px;white-space:nowrap;font:bold 11px/11px 'Liberation Sans',sans-serif;color:#ffffff;letter-spacing:-0.1px;">k_14</div>
<div style="position:absolute;left:276.13px;top:186.69px;white-space:nowrap;font:bold 11px/11px 'Liberation Sans',sans-serif;color:#ffffff;letter-spacing:-0.1px;">k_15</div>
<div style="position:absolute;left:351.26px;top:186.69px;white-space:nowrap;font:bold 11px/11px 'Liberation Sans',sans-serif;color:#ffffff;letter-spacing:-0.1px;">k_16</div>
<div style="position:absolute;left:426.39px;top:186.69px;white-space:nowrap;font:bold 11px/11px 'Liberation Sans',sans-serif;color:#ffffff;letter-spacing:-0.1px;">k_17</div>
<div style="position:absolute;left:501.52px;top:186.69px;white-space:nowrap;font:bold 11px/11px 'Liberation Sans',sans-serif;color:#ffffff;letter-spacing:-0.1px;">k_18</div>
<div style="position:absolute;left:576.65px;top:186.69px;white-space:nowrap;font:bold 11px/11px 'Liberation Sans',sans-serif;color:#ffffff;letter-spacing:-0.1px;">k_19</div>
<div style="position:absolute;left:651.78px;top:186.69px;white-space:nowrap;font:bold 11px/11px 'Liberation Sans',sans-serif;color:#ffffff;letter-spacing:-0.1px;">k_20</div>
<div style="position:absolute;left:726.91px;top:186.69px;white-space:nowrap;font:bold 11px/11px 'Liberation Sans',sans-serif;color:#ffffff;letter-spacing:-0.1px;">k_21</div>
<div style="position:absolute;left:802.04px;top:186.69px;white-space:nowrap;font:bold 11px/11px 'Liberation Sans',sans-serif;color:#ffffff;letter-spacing:-0.1px;">k_22</div>
<div style="position:absolute;left:877.17px;top:186.69px;white-space:nowrap;font:bold 11px/11px 'Liberation Sans',sans-serif;color:#ffffff;letter-spacing:-0.1px;">k_23</div>
<div style="position:absolute;left:952.3px;top:186.69px;white-space:nowrap;font:bold 11px/11px 'Liberation Sans',sans-serif;color:#ffffff;letter-spacing:-0.1px;">k_24</div>
<div style="position:absolute;left:1027.4299999999998px;top:186.69px;white-space:nowrap;font:bold 11px/11px 'Liberation Sans',sans-serif;color:#ffffff;letter-spacing:-0.1px;">k_25</div>
<div style="position:absolute;left:-202px;width:300px;text-align:right;top:211.69px;white-space:nowrap;font:bold 11px/11px 'Liberation Sans',sans-serif;color:#1a1a1a;letter-spacing:0px;">1</div>
<div style="position:absolute;left:-0.5px;width:300px;text-align:center;top:211.69px;white-space:nowrap;font:bold 11px/11px 'Liberation Sans',sans-serif;color:#1e1e1e;letter-spacing:-0.1px;">11-01-2017</div>
<div style="position:absolute;left:348.28px;width:300px;text-align:right;top:211.69px;white-space:nowrap;font:normal 11px/11px 'Liberation Sans',sans-serif;color:#222;letter-spacing:-0.3px;">1 000,00</div>
<div style="position:absolute;left:422.90999999999997px;width:300px;text-align:right;top:211.69px;white-space:nowrap;font:normal 11px/11px 'Liberation Sans',sans-serif;color:#222;letter-spacing:-0.3px;">230,00</div>
<div style="position:absolute;left:-202px;width:300px;text-align:right;top:228.69px;white-space:nowrap;font:bold 11px/11px 'Liberation Sans',sans-serif;color:#1a1a1a;letter-spacing:0px;">2</div>
<div style="position:absolute;left:-0.5px;width:300px;text-align:center;top:228.69px;white-space:nowrap;font:bold 11px/11px 'Liberation Sans',sans-serif;color:#1e1e1e;letter-spacing:-0.1px;">05-01-2017</div>
<div style="position:absolute;left:348.28px;width:300px;text-align:right;top:228.69px;white-space:nowrap;font:normal 11px/11px 'Liberation Sans',sans-serif;color:#222;letter-spacing:-0.3px;">500,00</div>
<div style="position:absolute;left:422.90999999999997px;width:300px;text-align:right;top:228.69px;white-space:nowrap;font:normal 11px/11px 'Liberation Sans',sans-serif;color:#222;letter-spacing:-0.3px;">115,00</div>
<div style="position:absolute;left:-202px;width:300px;text-align:right;top:245.69px;white-space:nowrap;font:bold 11px/11px 'Liberation Sans',sans-serif;color:#1a1a1a;letter-spacing:0px;">3</div>
<div style="position:absolute;left:-0.5px;width:300px;text-align:center;top:245.69px;white-space:nowrap;font:bold 11px/11px 'Liberation Sans',sans-serif;color:#1e1e1e;letter-spacing:-0.1px;">10-01-2017</div>
<div style="position:absolute;left:348.28px;width:300px;text-align:right;top:245.69px;white-space:nowrap;font:normal 11px/11px 'Liberation Sans',sans-serif;color:#222;letter-spacing:-0.3px;">15 000,00</div>
<div style="position:absolute;left:422.90999999999997px;width:300px;text-align:right;top:245.69px;white-space:nowrap;font:normal 11px/11px 'Liberation Sans',sans-serif;color:#222;letter-spacing:-0.3px;">3 450,00</div>
<div style="position:absolute;left:-27.670000000000016px;width:300px;text-align:right;top:270.19px;white-space:nowrap;font:bold 11px/11px 'Liberation Sans',sans-serif;color:#111;letter-spacing:-0.2px;">0,00</div>
<div style="position:absolute;left:47.45999999999998px;width:300px;text-align:right;top:270.19px;white-space:nowrap;font:bold 11px/11px 'Liberation Sans',sans-serif;color:#111;letter-spacing:-0.2px;">0,00</div>
<div style="position:absolute;left:122.58999999999997px;width:300px;text-align:right;top:270.19px;white-space:nowrap;font:bold 11px/11px 'Liberation Sans',sans-serif;color:#111;letter-spacing:-0.2px;">0,00</div>
<div style="position:absolute;left:197.71999999999997px;width:300px;text-align:right;top:270.19px;white-space:nowrap;font:bold 11px/11px 'Liberation Sans',sans-serif;color:#111;letter-spacing:-0.2px;">0,00</div>
<div style="position:absolute;left:272.85px;width:300px;text-align:right;top:270.19px;white-space:nowrap;font:bold 11px/11px 'Liberation Sans',sans-serif;color:#111;letter-spacing:-0.2px;">0,00</div>
<div style="position:absolute;left:347.98px;width:300px;text-align:right;top:270.19px;white-space:nowrap;font:bold 11px/11px 'Liberation Sans',sans-serif;color:#111;letter-spacing:-0.2px;">16 500,00</div>
<div style="position:absolute;left:423.11px;width:300px;text-align:right;top:270.19px;white-space:nowrap;font:bold 11px/11px 'Liberation Sans',sans-serif;color:#111;letter-spacing:-0.2px;">3 795,00</div>
<div style="position:absolute;left:498.24px;width:300px;text-align:right;top:270.19px;white-space:nowrap;font:bold 11px/11px 'Liberation Sans',sans-serif;color:#111;letter-spacing:-0.2px;">0,00</div>
<div style="position:absolute;left:573.37px;width:300px;text-align:right;top:270.19px;white-space:nowrap;font:bold 11px/11px 'Liberation Sans',sans-serif;color:#111;letter-spacing:-0.2px;">0,00</div>
<div style="position:absolute;left:648.5px;width:300px;text-align:right;top:270.19px;white-space:nowrap;font:bold 11px/11px 'Liberation Sans',sans-serif;color:#111;letter-spacing:-0.2px;">0,00</div>
<div style="position:absolute;left:723.6299999999999px;width:300px;text-align:right;top:270.19px;white-space:nowrap;font:bold 11px/11px 'Liberation Sans',sans-serif;color:#111;letter-spacing:-0.2px;">0,00</div>
<div style="position:absolute;left:1058px;top:159px;width:16px;height:153px;background:#f0f0f0;border-left:1px solid #e2e2e2;"></div>
<div style="position:absolute;left:1062px;top:190px;width:8px;height:90px;background:linear-gradient(90deg,#e4e4e4,#f6f6f6);border:1px solid #c4c4c4;border-radius:3px;"></div>
<svg style="position:absolute;left:1063px;top:181px" width="7" height="5" viewBox="0 0 7 5"><path d="M0 4 L3.5 0 L7 4 Z" fill="#7a7a7a"/></svg>
<svg style="position:absolute;left:1063px;top:303px" width="7" height="5" viewBox="0 0 7 5"><path d="M0 0 L3.5 4 L7 0 Z" fill="#7a7a7a"/></svg>
<div style="position:absolute;left:7px;top:312px;width:1067px;height:15px;background:#ffffff;border-top:1px solid #b5b8bc;"></div>
<svg style="position:absolute;left:12px;top:316px" width="80" height="8" viewBox="0 0 80 8"><path d="M1 1 V7" stroke="#666" stroke-width="1"/><path d="M6 1 L3 4 L6 7 Z M9 1 L6 4 L9 7 Z" fill="#666"/><path d="M26 1 L23 4 L26 7 Z" fill="#666"/><path d="M42 1 L45 4 L42 7 Z" fill="#666"/><path d="M61 1 L64 4 L61 7 Z M64 1 L67 4 L64 7 Z" fill="#666"/><path d="M69 1 V7" stroke="#666" stroke-width="1"/></svg>
<div style="position:absolute;left:85px;top:313px;width:59.5px;height:14px;background:#f0f000;border-left:1px solid #8a8a40;border-right:1px solid #c6c600;"></div>
<div style="position:absolute;left:-35.5px;width:300px;text-align:center;top:315.96px;white-space:nowrap;font:normal 9.5px/9.5px 'Liberation Sans',sans-serif;color:#2e2e08;letter-spacing:-0.15px;">Nagłówek</div>
<div style="position:absolute;left:144.5px;top:313px;width:56px;height:14px;background:linear-gradient(#ffffff 40%,#d9f5fb);"></div>
<div style="position:absolute;left:22.5px;width:300px;text-align:center;top:315.96px;white-space:nowrap;font:normal 9.5px/9.5px 'Liberation Sans',sans-serif;color:#1f2c38;letter-spacing:-0.15px;">Sprzedaż</div>
<div style="position:absolute;left:200.5px;top:313px;width:51px;height:14px;background:#ea8f72;border-left:1px solid #d07a60;"></div>
<div style="position:absolute;left:76px;width:300px;text-align:center;top:315.96px;white-space:nowrap;font:normal 9.5px/9.5px 'Liberation Sans',sans-serif;color:#5c3a30;letter-spacing:-0.15px;">Zakupy</div>
<div style="position:absolute;left:251.5px;top:313px;width:30px;height:14px;background:linear-gradient(#f0f0f0,#e2e2e2);border-right:1px solid #6a6a6a;"></div>
<svg style="position:absolute;left:261px;top:315px" width="11" height="10" viewBox="0 0 11 10"><path d="M5.5 1 V9 M1.5 5 H9.5" stroke="#555" stroke-width="1.5"/></svg>
<div style="position:absolute;left:281px;top:313px;width:355px;height:14px;background:linear-gradient(#f0f0f0,#e2e2e2);"></div>
<div style="position:absolute;left:636px;top:313px;width:4px;height:14px;background:#f5f5f5;"></div>
<svg style="position:absolute;left:636px;top:315px" width="4" height="10" viewBox="0 0 4 10"><path d="M2 0 V10" stroke="#9c9c9c" stroke-dasharray="1,1"/></svg>
<div style="position:absolute;left:640px;top:313px;width:418px;height:14px;background:#f7f7f7;"></div>
<svg style="position:absolute;left:645px;top:317px" width="5" height="7" viewBox="0 0 5 7"><path d="M4 0 L0 3.5 L4 7 Z" fill="#7a7a7a"/></svg>
<svg style="position:absolute;left:1050px;top:317px" width="5" height="7" viewBox="0 0 5 7"><path d="M0 0 L4 3.5 L0 7 Z" fill="#7a7a7a"/></svg>
<div style="position:absolute;left:749px;top:316px;width:127px;height:7px;background:linear-gradient(#e8e8e8,#d7d7d7);border:1px solid #bdbdbd;border-radius:3px;"></div>
<div style="position:absolute;left:1058px;top:313px;width:16px;height:14px;background:#eeeeee;"></div>
<div style="position:absolute;left:0px;top:328px;width:1080px;height:280px;background:#d9dbde;"></div>
<div style="position:absolute;left:4px;top:328px;width:1072px;height:24px;background:linear-gradient(#eeeff1,#e8e9eb);"></div>
<div style="position:absolute;left:5px;top:351px;width:1070px;height:1px;background:#b9bcc0;"></div>
<div style="position:absolute;left:4px;top:333px;width:67px;height:19px;background:#ecec3c;border:1px solid #b9b93a;border-bottom:none;"></div>
<div style="position:absolute;left:16px;top:338.04px;white-space:nowrap;font:normal 10px/10px 'Liberation Sans',sans-serif;color:#303010;letter-spacing:0px;">C# API</div>
<svg style="position:absolute;left:57px;top:339px" width="8" height="8" viewBox="0 0 8 8"><path d="M1 1 L7 7 M7 1 L1 7" stroke="#44441a" stroke-width="1.6"/></svg>
<svg style="position:absolute;left:1060px;top:339px" width="7" height="5" viewBox="0 0 7 5"><path d="M0 0 H6.5 L3.25 3.8 Z" fill="#6a6c70"/></svg>
<div style="position:absolute;left:6px;top:352px;width:1068px;height:26px;background:#eaebed;border-left:1px solid #b9bcc0;border-right:1px solid #b9bcc0;border-top:1px solid #f3f4f5;"></div>
<div style="position:absolute;left:912px;top:360.46px;white-space:nowrap;font:normal 9.5px/9.5px 'Liberation Sans',sans-serif;color:#3a3a3a;letter-spacing:-0.25px;">Sender : TGSoft.UI.XLS.SSController</div>
<div style="position:absolute;left:1069px;top:358px;width:1px;height:14px;background:#c8cacd;"></div>
<div style="position:absolute;left:33px;top:358px;width:1px;height:13px;background:#c9cbce;"></div>
<div style="position:absolute;left:105px;top:358px;width:1px;height:13px;background:#c9cbce;"></div>
<div style="position:absolute;left:176px;top:358px;width:1px;height:13px;background:#c9cbce;"></div>
<svg style="position:absolute;left:12px;top:358px" width="14" height="14" viewBox="0 0 14 14"><path d="M2 5 L6 1 L13 8 L9 12 Z" fill="#b9a98a" stroke="#7b6c54" stroke-width="0.8"/><path d="M1 1 L5 1 L1 5 Z" fill="#8b8b8b"/><path d="M9 12 L7 14" stroke="#555"/></svg>
<svg style="position:absolute;left:39px;top:359px" width="16" height="12" viewBox="0 0 16 12"><path d="M0.5 1 H5 L6.5 2.5 H13 V11 H0.5 Z" fill="#e3a93c" stroke="#b27a1f" stroke-width="0.8"/><path d="M2.5 4.5 H15.5 L13 11 H0.5 Z" fill="#f5c463" stroke="#b27a1f" stroke-width="0.8"/></svg>
<svg style="position:absolute;left:62px;top:358px" width="14" height="14" viewBox="0 0 14 14"><rect x="0.5" y="0.5" width="13" height="13" fill="#5a82bd" stroke="#3d5f92"/><rect x="3" y="1" width="8" height="4.5" fill="#eef2f8"/><rect x="2.5" y="8" width="9" height="5" fill="#dfe7f2"/></svg>
<svg style="position:absolute;left:84px;top:358px" width="15" height="14" viewBox="0 0 15 14"><rect x="3.5" y="0.5" width="11" height="11" fill="#eef2f8" stroke="#8d9bb0"/><rect x="0.5" y="2.5" width="11" height="11" fill="#8fa6c4" stroke="#4d6686"/><rect x="3" y="3" width="6" height="4" fill="#eef2f8"/><rect x="1.5" y="9" width="9" height="4.5" fill="#1e2a3a"/></svg>
<svg style="position:absolute;left:111px;top:357px" width="16" height="16" viewBox="0 0 16 16"><path d="M1 4 H6 M1 12 H6" stroke="#8a96a6" stroke-width="1"/><path d="M1 4 V12" stroke="#8a96a6" stroke-width="1"/><path d="M11 1 L15 5 H12.5 V11 H15 L11 15 L7 11 H9.5 V5 H7 Z" fill="#2c6fd8" stroke="#1b4c9c" stroke-width="0.6"/></svg>
<svg style="position:absolute;left:132px;top:357px" width="16" height="16" viewBox="0 0 16 16"><path d="M1 4 H6 M1 12 H6" stroke="#8a96a6" stroke-width="1"/><path d="M1 4 V12" stroke="#8a96a6" stroke-width="1"/><path d="M11 7 L15 3 H12.5 V0.5 H9.5 V3 H7 Z M11 9 L15 13 H12.5 V15.5 H9.5 V13 H7 Z" fill="#2c6fd8" stroke="#1b4c9c" stroke-width="0.6"/><path d="M7 8 H15" stroke="#1b4c9c"/></svg>
<svg style="position:absolute;left:155px;top:357px" width="16" height="16" viewBox="0 0 16 16"><circle cx="8" cy="8" r="7.2" fill="#5b8fd4" stroke="#3d69a8" stroke-width="0.9"/><circle cx="8" cy="8" r="5" fill="none" stroke="#b8d4f6" stroke-width="0.8"/><circle cx="5" cy="8" r="1" fill="#fff"/><circle cx="8" cy="8" r="1" fill="#fff"/><circle cx="11" cy="8" r="1" fill="#fff"/></svg>
<svg style="position:absolute;left:184px;top:358px" width="14" height="14" viewBox="0 0 14 14"><path d="M1 0.5 L13 7 L1 13.5 Z" fill="#7db6ea" stroke="#4f8cc8" stroke-width="0.8"/></svg>
<div style="position:absolute;left:6px;top:377px;width:1068px;height:200px;background:#ffffff;border-left:1px solid #b9bcc0;border-right:1px solid #b9bcc0;"></div>
<div style="position:absolute;left:7px;top:377px;width:13px;height:199px;background:#f0f0f0;"></div>
<div style="position:absolute;left:20px;top:377px;width:1px;height:199px;background:#6e7176;"></div>
<div style="position:absolute;left:21px;top:377px;width:17px;height:199px;background:#f4fbfc;"></div>
<svg style="position:absolute;left:38px;top:377px" width="1" height="199" viewBox="0 0 1 199"><path d="M0.5 0 V199" stroke="#8a8d90" stroke-width="1" stroke-dasharray="1,1.5"/></svg>
<svg style="position:absolute;left:43px;top:381px" width="9" height="195" viewBox="0 0 9 195"><rect x="0.5" y="0.5" width="7" height="7.5" fill="#fff" stroke="#a0a0a0"/><path d="M2 4.5 H6" stroke="#555"/><path d="M4 8 V195" stroke="#b0b0b0"/></svg>
<div style="position:absolute;left:1060px;top:377px;width:14px;height:199px;background:#f2f2f2;border-left:1px solid #e0e0e0;"></div>
<div style="position:absolute;left:1061px;top:379px;width:12px;height:2px;background:#8a8c90;"></div>
<svg style="position:absolute;left:1063px;top:388px" width="9" height="6" viewBox="0 0 9 6"><path d="M0.5 5 L4.5 1 L8.5 5" fill="none" stroke="#555" stroke-width="1.6"/></svg>
<svg style="position:absolute;left:1063px;top:564px" width="9" height="6" viewBox="0 0 9 6"><path d="M0.5 1 L4.5 5 L8.5 1" fill="none" stroke="#555" stroke-width="1.6"/></svg>
<div style="position:absolute;left:1061px;top:437px;width:11px;height:62px;background:#d3d3d3;"></div>
<div style="position:absolute;left:6px;top:575px;width:1068px;height:4px;background:linear-gradient(#f0f1f2,#e6e7e9);border-bottom:1px solid #b3b6ba;"></div>
<div style="position:absolute;left:0px;top:579px;width:1080px;height:29px;background:#d7d9dc;"></div>
<div style="position:absolute;left:5px;top:579px;width:1072px;height:25px;background:linear-gradient(#e4e5e7 0px,#e4e5e7 2px,#c3c5c8 2px,#c3c5c8 3px,#dcdde0 4px,#cccdd1 24px);"></div>
<div style="position:absolute;left:0px;top:604px;width:1080px;height:4px;background:linear-gradient(#dfe0e2,#c2c4c7);"></div>
<div style="position:absolute;left:846px;top:585px;width:1px;height:16px;background:#c3c5c8;"></div>
<div style="position:absolute;left:856px;top:588.46px;white-space:nowrap;font:normal 9.5px/9.5px 'Liberation Sans',sans-serif;color:#3b3b3b;letter-spacing:-0.1px;">100%</div>
<div style="position:absolute;left:883px;top:584px;width:170px;height:16px;background:linear-gradient(#e6e7e9,#dadcdf);border:1px solid #d0d2d5;border-radius:3px;"></div>
<svg style="position:absolute;left:885px;top:586px" width="13" height="13" viewBox="0 0 13 13"><circle cx="6.5" cy="6.5" r="5.5" fill="#f7f7f8" stroke="#8d9094" stroke-width="1"/><path d="M3.5 6.5 H9.5" stroke="#55585c" stroke-width="1.4"/></svg>
<div style="position:absolute;left:904px;top:592px;width:129px;height:1px;background:linear-gradient(90deg,#c9b9d9,#b8b0c8 50%,#c4c5c8 50%,#c9cacd);"></div>
<svg style="position:absolute;left:963px;top:586px" width="10" height="14" viewBox="0 0 10 14"><path d="M0.5 0.5 H9.5 V9 L5 13.5 L0.5 9 Z" fill="#eef0f6" stroke="#8e95a8" stroke-width="0.9"/></svg>
<svg style="position:absolute;left:1039px;top:586px" width="13" height="13" viewBox="0 0 13 13"><circle cx="6.5" cy="6.5" r="5.5" fill="#f7f7f8" stroke="#8d9094" stroke-width="1"/><path d="M3.5 6.5 H9.5 M6.5 3.5 V9.5" stroke="#55585c" stroke-width="1.4"/></svg>
<svg style="position:absolute;left:1062px;top:592px" width="11" height="11" viewBox="0 0 11 11"><path d="M10 2 L2 10 M10 6 L6 10" stroke="#b2b4b8" stroke-width="1"/></svg>
<div style="position:absolute;left:47px;top:377px;width:1013px;height:197px;overflow:hidden;font:11px/13.54px 'Liberation Mono',monospace;letter-spacing:0.150px;color:#2c2c2c;"><div style="position:absolute;left:61.30px;top:3.30px;white-space:pre;"><span style="color:#4040bf">public</span> XlsApi(SSController sender)</div><div style="position:absolute;left:-26px;width:15px;text-align:right;top:3.30px;white-space:pre;color:#2b91af">10</div><div style="position:absolute;left:61.30px;top:16.84px;white-space:pre;">{</div><div style="position:absolute;left:-26px;width:15px;text-align:right;top:16.84px;white-space:pre;color:#2b91af">11</div><div style="position:absolute;left:88.30px;top:30.38px;white-space:pre;"><span style="color:#4040bf">var</span> sc = <span style="color:#4040bf">new</span> SSController();</div><div style="position:absolute;left:-26px;width:15px;text-align:right;top:30.38px;white-space:pre;color:#2b91af">12</div><div style="position:absolute;left:88.30px;top:43.92px;white-space:pre;"><span style="color:#4040bf">if</span> (!sc.LoadDocument(<span style="color:#a31515">@"C:\TMP\JPK\</span><span style="color:#8a4010;background:#fdf04e;padding:2px 0 4px 0;margin-left:-3px;padding-left:3px">ZestawienieSprzedazy.xlsx</span><span style="color:#a31515">"</span>))</div><div style="position:absolute;left:-26px;width:15px;text-align:right;top:43.92px;white-space:pre;color:#2b91af">13</div><div style="position:absolute;left:115.30px;top:57.46px;white-space:pre;"><span style="color:#4040bf">return</span>;</div><div style="position:absolute;left:-26px;width:15px;text-align:right;top:57.46px;white-space:pre;color:#2b91af">14</div><div style="position:absolute;left:7.30px;top:71.00px;white-space:pre;"></div><div style="position:absolute;left:-26px;width:15px;text-align:right;top:71.00px;white-space:pre;color:#2b91af">15</div><div style="position:absolute;left:88.30px;top:84.54px;white-space:pre;"><span style="color:#4040bf">var</span> xs = <span style="color:#4040bf">new</span> WsTable(sc);</div><div style="position:absolute;left:-26px;width:15px;text-align:right;top:84.54px;white-space:pre;color:#2b91af">16</div><div style="position:absolute;left:88.30px;top:98.08px;white-space:pre;"><span style="color:#4040bf">var</span> xt = <span style="color:#4040bf">new</span> WbTable(sender.GetWorksheet(1));</div><div style="position:absolute;left:-26px;width:15px;text-align:right;top:98.08px;white-space:pre;color:#2b91af">17</div><div style="position:absolute;left:88.30px;top:111.62px;white-space:pre;"><span style="color:#4040bf">int</span> lp = xt.GetValue(xt.LastRow, <span style="color:#a31515">"LpSprzedazy"</span>).ToInt();</div><div style="position:absolute;left:-26px;width:15px;text-align:right;top:111.62px;white-space:pre;color:#2b91af">18</div><div style="position:absolute;left:88.30px;top:125.16px;white-space:pre;"><span style="color:#4040bf">for</span> (<span style="color:#4040bf">int</span> i = 1; i &lt;= xs.LastRow; i++)</div><div style="position:absolute;left:-26px;width:15px;text-align:right;top:125.16px;white-space:pre;color:#2b91af">19</div><div style="position:absolute;left:88.30px;top:138.70px;white-space:pre;">{</div><div style="position:absolute;left:-26px;width:15px;text-align:right;top:138.70px;white-space:pre;color:#2b91af">20</div><div style="position:absolute;left:115.30px;top:152.24px;white-space:pre;">lp++;</div><div style="position:absolute;left:-26px;width:15px;text-align:right;top:152.24px;white-space:pre;color:#2b91af">21</div><div style="position:absolute;left:115.30px;top:165.78px;white-space:pre;">xt.NewRow();</div><div style="position:absolute;left:-26px;width:15px;text-align:right;top:165.78px;white-space:pre;color:#2b91af">22</div><div style="position:absolute;left:115.30px;top:179.32px;white-space:pre;">xt.SetField(<span style="color:#a31515">"LpSprzedazy"</span>, lp);</div><div style="position:absolute;left:-26px;width:15px;text-align:right;top:179.32px;white-space:pre;color:#2b91af">23</div><div style="position:absolute;left:115.30px;top:192.86px;white-space:pre;">xt.SetField(<span style="color:#a31515">"DataWystawienia"</span>, xs.GetValue(i, <span style="color:#a31515">"Data"</span>));</div><div style="position:absolute;left:-26px;width:15px;text-align:right;top:192.86px;white-space:pre;color:#2b91af">24</div></div>
<div style="position:absolute;left:20px;top:377px;width:17px;height:199px;overflow:hidden;font:11px/13.54px 'Liberation Mono',monospace;color:#3a9a92;letter-spacing:-0.2px"><div style="position:absolute;left:0px;width:16px;text-align:right;top:3.30px;white-space:pre;">10</div><div style="position:absolute;left:0px;width:16px;text-align:right;top:16.84px;white-space:pre;">11</div><div style="position:absolute;left:0px;width:16px;text-align:right;top:30.38px;white-space:pre;">12</div><div style="position:absolute;left:0px;width:16px;text-align:right;top:43.92px;white-space:pre;">13</div><div style="position:absolute;left:0px;width:16px;text-align:right;top:57.46px;white-space:pre;">14</div><div style="position:absolute;left:0px;width:16px;text-align:right;top:71.00px;white-space:pre;">15</div><div style="position:absolute;left:0px;width:16px;text-align:right;top:84.54px;white-space:pre;">16</div><div style="position:absolute;left:0px;width:16px;text-align:right;top:98.08px;white-space:pre;">17</div><div style="position:absolute;left:0px;width:16px;text-align:right;top:111.62px;white-space:pre;">18</div><div style="position:absolute;left:0px;width:16px;text-align:right;top:125.16px;white-space:pre;">19</div><div style="position:absolute;left:0px;width:16px;text-align:right;top:138.70px;white-space:pre;">20</div><div style="position:absolute;left:0px;width:16px;text-align:right;top:152.24px;white-space:pre;">21</div><div style="position:absolute;left:0px;width:16px;text-align:right;top:165.78px;white-space:pre;">22</div><div style="position:absolute;left:0px;width:16px;text-align:right;top:179.32px;white-space:pre;">23</div><div style="position:absolute;left:0px;width:16px;text-align:right;top:192.86px;white-space:pre;">24</div></div>
<div style="position:absolute;left:0px;top:41px;width:4px;height:567px;background:linear-gradient(90deg,#cdd0d3 0px,#c0c3c7 2px,#aeb1b5 3px,#d8dadd 4px);"></div>
<div style="position:absolute;left:1076px;top:41px;width:4px;height:567px;background:linear-gradient(90deg,#d8dadd 0px,#aeb1b5 1px,#c0c3c7 2px,#cdd0d3 4px);"></div>
</div></body></html>
